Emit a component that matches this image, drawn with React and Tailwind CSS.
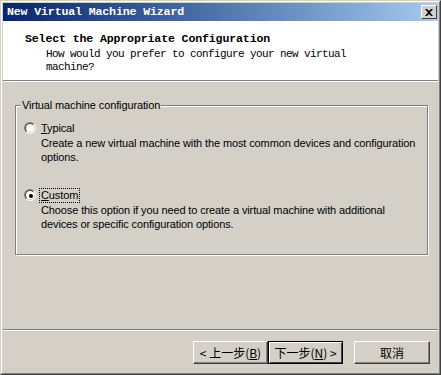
import { useState } from 'react'

const mono = { fontFamily: '"Liberation Mono", "DejaVu Sans Mono", monospace' }

function Radio({ checked }) {
  return (
    <span className="relative inline-block w-[12px] h-[12px] shrink-0 rounded-full border border-[#808080] border-r-white border-b-white">
      <span className="absolute inset-0 rounded-full border border-[#404040] border-r-[#d4d0c8] border-b-[#d4d0c8] bg-white" />
      {checked && <span className="absolute left-[4px] top-[4px] w-[4px] h-[4px] rounded-full bg-black" />}
    </span>
  )
}

function Option({ label, hotkey, lines, checked, focused, onClick }) {
  const rest = label.slice(1)
  return (
    <div className="flex flex-col">
      <button type="button" onClick={onClick} className="flex items-center h-[14px] pl-[8px] text-left">
        <Radio checked={checked} />
        <span className={`ml-[4px] px-px leading-[13px] ${focused ? 'outline outline-1 outline-dotted outline-black' : ''}`}>
          <span className="underline">{hotkey}</span>{rest}
        </span>
      </button>
      <div className="pl-[25px] mt-[1px] leading-[14px] pr-[2px]">
        {lines.map((l, i) => <div key={i}>{l}</div>)}
      </div>
    </div>
  )
}

export default function App() {
  const [choice, setChoice] = useState('custom')

  return (
    <div
      className="w-[441px] h-[375px] bg-[#d4d0c8] border border-[#d4d0c8] border-r-[#404040] border-b-[#404040] text-black text-[11px] tracking-[-0.12px] overflow-hidden"
      style={{ fontFamily: '"Liberation Sans", Arial, sans-serif' }}
    >
      <div className="h-full flex flex-col border border-white border-r-[#808080] border-b-[#808080] p-px">
        {/* title bar */}
        <div className="h-[18px] shrink-0 flex items-center justify-between pl-[4px] pr-[1px] bg-gradient-to-r from-[#0a246a] to-[#a6caf0]">
          <span className="text-white font-bold text-[11.6px] tracking-[-0.15px]" style={mono}>New Virtual Machine Wizard</span>
          <button type="button" className="w-[16px] h-[14px] flex items-center justify-center bg-[#d4d0c8] border border-white border-r-[#404040] border-b-[#404040]">
            <svg width="8" height="7" viewBox="0 0 8 7">
              <path d="M0 0h2l2 2 2-2h2L5 3.5 8 7H6L4 5 2 7H0l3-3.5z" fill="#000" />
            </svg>
          </button>
        </div>

        {/* header */}
        <div className="h-[59px] shrink-0 bg-white pl-[22px] pt-[11px]" style={mono}>
          <div className="font-bold text-[11.6px] leading-[14px] tracking-[-0.15px]">Select the Appropriate Configuration</div>
          <div className="pl-[21px] pt-[2px] text-[11px] leading-[13px] tracking-[-0.6px]">
            How would you prefer to configure your new virtual<br />machine?
          </div>
        </div>
        <div className="shrink-0 border-t border-[#808080] border-b border-b-white" />

        {/* body */}
        <div className="flex-1 flex flex-col">
          <div className="relative mt-[23px] ml-[12px] mr-[10px] h-[150px] shrink-0 border border-[#808080] shadow-[inset_1px_1px_0_#fff,1px_1px_0_#fff] pt-[15px]">
            <span className="absolute left-[5px] top-[-7px] px-[1px] leading-[13px] bg-[#d4d0c8]">Virtual machine configuration</span>
            <div className="flex flex-col gap-[24px]">
              <Option
                label="Typical"
                hotkey="T"
                lines={['Create a new virtual machine with the most common devices and configuration', 'options.']}
                checked={choice === 'typical'}
                focused={choice === 'typical'}
                onClick={() => setChoice('typical')}
              />
              <Option
                label="Custom"
                hotkey="C"
                lines={['Choose this option if you need to create a virtual machine with additional', 'devices or specific configuration options.']}
                checked={choice === 'custom'}
                focused={choice === 'custom'}
                onClick={() => setChoice('custom')}
              />
            </div>
          </div>

          <div className="flex-1" />
          <div className="shrink-0 border-t border-[#808080] border-b border-b-white" />

          <div
            className="shrink-0 h-[41px] flex items-start justify-end pt-[10px] pr-[8px] text-[12px] tracking-normal"
            style={{ fontFamily: '"Noto Sans CJK SC", "Liberation Sans", sans-serif' }}
          >
            <button type="button" className="w-[75px] h-[23px] flex items-center justify-center bg-[#d4d0c8] border border-white border-r-[#404040] border-b-[#404040] shadow-[inset_-1px_-1px_0_#808080] leading-none">
              &lt; 上一步(<span className="underline">B</span>)
            </button>
            <button type="button" className="w-[75px] h-[23px] flex items-center justify-center bg-[#d4d0c8] border border-black leading-none shadow-[inset_1px_1px_0_#fff,inset_-1px_-1px_0_#404040]">
              下一步(<span className="underline">N</span>) &gt;
            </button>
            <button type="button" className="ml-[11px] w-[76px] h-[23px] flex items-center justify-center bg-[#d4d0c8] border border-white border-r-[#404040] border-b-[#404040] shadow-[inset_-1px_-1px_0_#808080] leading-none">
              取消
            </button>
          </div>
        </div>
      </div>
    </div>
  )
}
